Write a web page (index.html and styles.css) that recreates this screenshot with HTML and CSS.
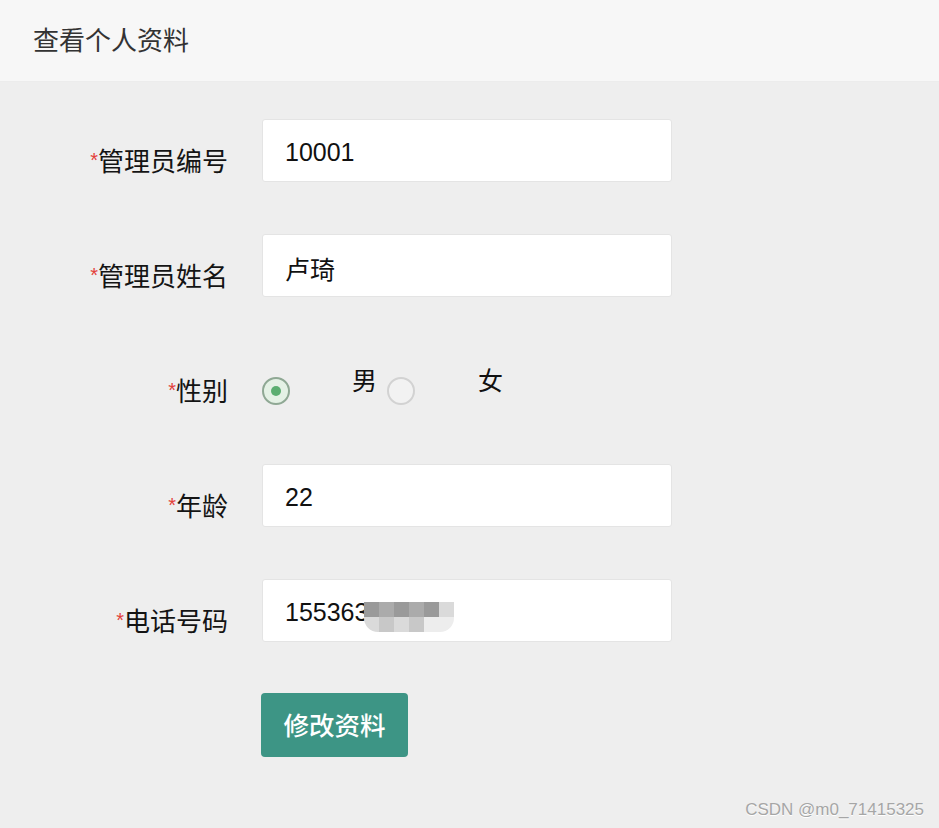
FILE: index.html
```html
<!DOCTYPE html>
<html lang="zh-CN">
<head>
<meta charset="utf-8">
<title>查看个人资料</title>
<link rel="stylesheet" href="styles.css">
</head>
<body>
<div class="page">
  <header class="header">查看个人资料</header>
  <main class="form">
    <div class="row">
      <label class="label"><span class="req">*</span>管理员编号</label>
      <div class="field">10001</div>
    </div>
    <div class="row">
      <label class="label"><span class="req">*</span>管理员姓名</label>
      <div class="field">卢琦</div>
    </div>
    <div class="row row-gender">
      <label class="label"><span class="req">*</span>性别</label>
      <div class="radios">
        <span class="radio checked"><span class="dot"></span></span>
        <span class="radio-text text-male">男</span>
        <span class="radio"></span>
        <span class="radio-text text-female">女</span>
      </div>
    </div>
    <div class="row">
      <label class="label"><span class="req">*</span>年龄</label>
      <div class="field">22</div>
    </div>
    <div class="row">
      <label class="label"><span class="req">*</span>电话号码</label>
      <div class="field">155363<span class="mosaic"><i class="m1"></i><i class="m2"></i><i class="m1"></i><i class="m2"></i><i class="m1"></i><i class="m4"></i><i class="m4"></i><i class="m3"></i><i class="m4"></i><i class="m3"></i><i class="m5"></i><i class="m5"></i></span></div>
    </div>
    <div class="row row-button">
      <button class="btn" type="button">修改资料</button>
    </div>
  </main>
  <div class="watermark">CSDN @m0_71415325</div>
</div>
</body>
</html>
```

FILE: styles.css
```css
* {
  box-sizing: border-box;
}

html, body {
  margin: 0;
  padding: 0;
  height: 100%;
}

body {
  background: #eeeeee;
  font-family: "Liberation Sans", "Noto Sans CJK SC", sans-serif;
  color: #111;
}

.page {
  min-height: 828px;
  display: flex;
  flex-direction: column;
}

.header {
  height: 82px;
  background: #f7f7f7;
  display: flex;
  align-items: center;
  padding-left: 33px;
  padding-bottom: 5px;
  font-size: 26px;
  color: #333;
  border-bottom: 1px solid #ececec;
}

.form {
  padding-top: 37px;
  display: flex;
  flex-direction: column;
  gap: 53px;
}

.row {
  display: flex;
  align-items: flex-start;
  gap: 34px;
  height: 62px;
}

.label {
  width: 228px;
  text-align: right;
  padding-top: 27px;
  font-size: 26px;
  line-height: 28px;
  color: #141414;
}

.req {
  color: #e3403a;
  font-size: 20px;
  vertical-align: 4px;
}

.field {
  width: 410px;
  height: 63px;
  background: #fff;
  border: 1px solid #e4e4e4;
  border-radius: 3px;
  padding-left: 22px;
  padding-top: 4px;
  display: flex;
  align-items: center;
  font-size: 25px;
  color: #111;
}

.mosaic {
  display: grid;
  grid-template-columns: repeat(6, 15px);
  grid-template-rows: 15px 15px;
  margin-top: 8px;
  margin-left: -4px;
  border-radius: 0 0 14px 14px;
  overflow: hidden;
}

.mosaic i {
  display: block;
}

.mosaic .m1 { background: #9a9a9a; }
.mosaic .m2 { background: #ababab; }
.mosaic .m3 { background: #c8c8c8; }
.mosaic .m4 { background: #dadada; }
.mosaic .m5 { background: #ededed; }

.radios {
  display: flex;
  align-items: flex-start;
}

.radio {
  width: 28px;
  height: 28px;
  border-radius: 50%;
  border: 2px solid #d2d2d2;
  margin-top: 28px;
  display: flex;
  align-items: center;
  justify-content: center;
  background: #f2f2f2;
}

.radio.checked {
  border-color: #8fa894;
  background: #e4f1e5;
}

.radio .dot {
  width: 10px;
  height: 10px;
  border-radius: 50%;
  background: #5bae70;
}

.radio-text {
  font-size: 25px;
  line-height: 28px;
  margin-top: 18px;
  color: #111;
}

.text-male {
  margin-left: 62px;
  margin-right: 10px;
}

.text-female {
  margin-left: 63px;
}

.row-button {
  padding-left: 261px;
  height: 64px;
  margin-top: -1px;
}

.btn {
  width: 147px;
  height: 64px;
  background: #3d9585;
  border: none;
  border-radius: 4px;
  color: #fff;
  font-family: "Liberation Sans", "Noto Sans CJK SC", sans-serif;
  font-size: 25.5px;
  font-weight: 500;
  padding: 0 0 4px 0;
}

.watermark {
  margin-top: auto;
  align-self: flex-end;
  margin-right: 15px;
  margin-bottom: 8px;
  font-size: 17px;
  color: #a6a6a6;
  text-shadow: 0 1px 0 #fff;
}
```
